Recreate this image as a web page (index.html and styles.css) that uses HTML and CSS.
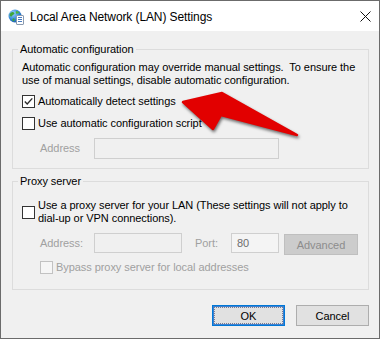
FILE: index.html
```html
<!DOCTYPE html>
<html>
<head>
<meta charset="utf-8">
<link rel="stylesheet" href="styles.css">
</head>
<body>
<div class="window">
  <div class="titlebar">
    <svg class="app-icon" width="16" height="16" viewBox="0 0 16 16">
      <defs>
        <radialGradient id="globe" cx="0.35" cy="0.3" r="0.8">
          <stop offset="0" stop-color="#9fd4ff"/>
          <stop offset="0.6" stop-color="#2f86d6"/>
          <stop offset="1" stop-color="#1a4f9c"/>
        </radialGradient>
      </defs>
      <circle cx="7" cy="7" r="6.5" fill="url(#globe)"/>
      <path d="M3 3.5 C4.5 2.5 6 3 6.5 4.5 C6 6 4.5 5.5 4 7 C3.5 8 2 7.5 1.5 6 C1.8 4.8 2.3 4 3 3.5 Z" fill="#3fa63a"/>
      <path d="M8 2 C9.5 1.8 11 2.8 11.5 4 C10.5 4.5 9.5 4 9 5 C8 5 7.5 3.5 8 2 Z" fill="#4cb543"/>
      <path d="M5 9.5 C6 9 7 10 6.5 11.5 C6 12.5 5 12.5 4.5 11.5 C4.3 10.8 4.5 10 5 9.5 Z" fill="#3fa63a"/>
      <rect x="8.5" y="6.5" width="7" height="9" rx="0.5" fill="#ffffff" stroke="#8a9bb0"/>
      <path d="M10 8.5h4M10 10.5h4M10 12.5h4" stroke="#4a7cc0" stroke-width="1"/>
    </svg>
    <span class="title">Local Area Network (LAN) Settings</span>
    <svg class="close" width="11" height="11" viewBox="0 0 11 11">
      <path d="M0.5 0.5 L10.5 10.5 M10.5 0.5 L0.5 10.5" stroke="#111" stroke-width="1"/>
    </svg>
  </div>
  <div class="content">
    <fieldset class="group group-auto">
      <legend>Automatic configuration</legend>
      <p class="desc">Automatic configuration may override manual settings.&nbsp; To ensure the<br>use of manual settings, disable automatic configuration.</p>
      <div class="check-row row-detect">
        <span class="box">
          <svg width="11" height="11" viewBox="0 0 11 11"><path d="M1.8 5.6 L4.2 8 L9.3 2.4" fill="none" stroke="#2b2b2b" stroke-width="1.4"/></svg>
        </span>
        <span class="check-text">Automatically detect settings</span>
      </div>
      <div class="check-row row-script">
        <span class="box"></span>
        <span class="check-text">Use automatic configuration script</span>
      </div>
      <div class="field-row row-auto-addr">
        <span class="field-label disabled">Address</span>
        <span class="input input-wide"></span>
      </div>
    </fieldset>

    <fieldset class="group group-proxy">
      <legend>Proxy server</legend>
      <div class="check-row row-proxy">
        <span class="box"></span>
        <span class="check-text multi">Use a proxy server for your LAN (These settings will not apply to<br>dial-up or VPN connections).</span>
      </div>
      <div class="field-row row-proxy-fields">
        <span class="field-label disabled">Address:</span>
        <span class="input input-addr"></span>
        <span class="port-label disabled">Port:</span>
        <span class="input input-port">80</span>
        <span class="btn btn-disabled">Advanced</span>
      </div>
      <div class="check-row row-bypass">
        <span class="box box-disabled"></span>
        <span class="check-text disabled">Bypass proxy server for local addresses</span>
      </div>
    </fieldset>

    <div class="buttons">
      <span class="btn btn-default">OK</span>
      <span class="btn">Cancel</span>
    </div>
  </div>

  <svg class="arrow" width="380" height="339" viewBox="0 0 380 339">
    <polygon points="183,102 222,93 297,135 221,115 213,129" fill="#e20000" stroke="#e20000" stroke-width="2.5" stroke-linejoin="round"/>
  </svg>
</div>
</body>
</html>
```

FILE: styles.css
```css
* {
  box-sizing: border-box;
}

html, body {
  margin: 0;
  padding: 0;
  background: #ffffff;
}

body {
  font-family: "Liberation Sans", Arial, sans-serif;
  font-size: 11px;
  letter-spacing: -0.06px;
  color: #000000;
}

.window {
  position: relative;
  width: 380px;
  height: 339px;
  border: 1px solid #6b6b6b;
  display: flex;
  flex-direction: column;
  overflow: hidden;
}

.titlebar {
  height: 30px;
  flex: 0 0 30px;
  background: #ffffff;
  display: flex;
  align-items: center;
  padding-left: 7px;
  padding-right: 8px;
}

.app-icon {
  flex: 0 0 16px;
  margin-right: 6px;
  margin-top: 1px;
}

.title {
  font-size: 12px;
  letter-spacing: -0.1px;
  line-height: 16px;
  margin-top: 1px;
  white-space: nowrap;
}

.close {
  margin-left: auto;
  margin-top: 1px;
}

.content {
  flex: 1;
  background: #f0f0f0;
  padding: 11px 10px 0 11px;
  display: flex;
  flex-direction: column;
}

.group {
  margin: 0;
  border: 1px solid #dcdcdc;
  padding: 0 8px 9px 9px;
  min-width: 0;
}

.group legend {
  padding: 0 2px;
  margin-left: -4px;
  line-height: 14px;
  height: 14px;
}

.group-proxy {
  margin-top: 5px;
  padding-bottom: 15px;
}

.desc {
  margin: 5px 0 0;
  line-height: 13px;
  white-space: nowrap;
}

.check-row {
  display: flex;
  align-items: center;
  gap: 3px;
  white-space: nowrap;
  line-height: 13px;
}

.check-text {
  line-height: 13px;
}

.row-detect {
  margin-top: 8px;
}

.row-script {
  margin-top: 9px;
}

.row-proxy {
  margin-top: 11px;
}

.row-bypass {
  margin-top: 6px;
  margin-left: 18px;
}

.box {
  flex: 0 0 13px;
  width: 13px;
  height: 13px;
  border: 1px solid #333333;
  background: #ffffff;
  display: flex;
  align-items: center;
  justify-content: center;
}

.box-disabled {
  border-color: #c2c2c2;
  background: #f6f6f6;
}

.disabled {
  color: #a0a0a0;
}

.field-row {
  display: flex;
  align-items: flex-start;
  white-space: nowrap;
  margin-left: 18px;
}

.row-auto-addr {
  margin-top: 8px;
  align-items: center;
}

.row-proxy-fields {
  margin-top: 8px;
  height: 22px;
}

.field-label {
  width: 54px;
  flex: 0 0 54px;
  line-height: 20px;
}

.row-auto-addr .field-label {
  line-height: 21px;
}

.port-label {
  margin-left: 13px;
  width: 36px;
  flex: 0 0 36px;
  line-height: 20px;
}

.input {
  display: block;
  border: 1px solid #cfcfcf;
  background: #f0f0f0;
  height: 20px;
}

.input-wide {
  width: 185px;
  height: 21px;
}

.input-addr {
  width: 88px;
}

.input-port {
  width: 48px;
  padding-left: 5px;
  line-height: 18px;
  color: #6d6d6d;
  background: #f4f4f4;
}

.btn {
  display: flex;
  align-items: center;
  justify-content: center;
  width: 73px;
  height: 21px;
  border: 1px solid #adadad;
  background: #e1e1e1;
  color: #000000;
  position: relative;
}

.btn-disabled {
  margin-left: 5px;
  margin-top: 1px;
  width: 74px;
  border-color: #bfbfbf;
  background: #cccccc;
  color: #8c8c8c;
}

.buttons {
  display: flex;
  justify-content: flex-end;
  gap: 11px;
  margin-top: 15px;
}

.btn-default {
  border-color: #0078d7;
  box-shadow: inset 0 0 0 1px #3d7fcf;
}

.btn-default::after {
  content: "";
  position: absolute;
  inset: 1px;
  border: 1px dotted #1a1a40;
  opacity: 0.5;
}

.arrow {
  position: absolute;
  left: -1px;
  top: -1px;
  pointer-events: none;
  filter: drop-shadow(1px 2px 1.5px rgba(0, 0, 0, 0.55));
}
```
